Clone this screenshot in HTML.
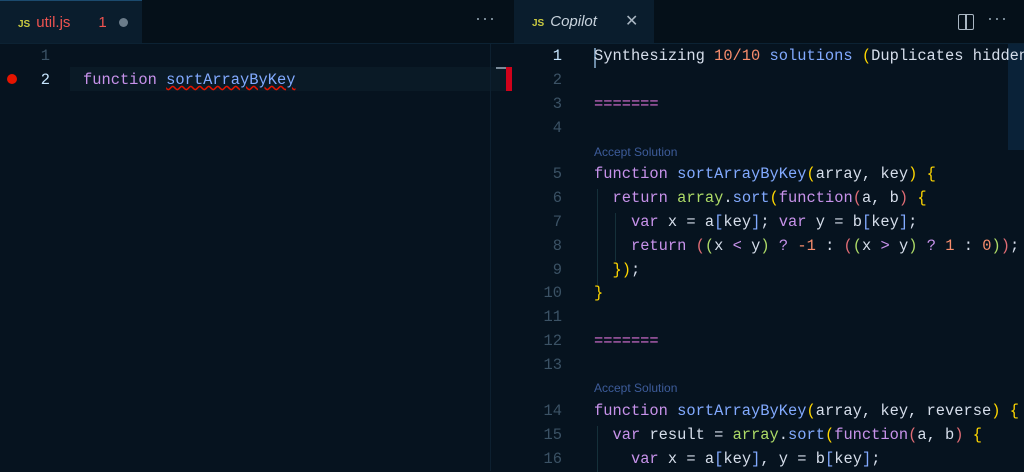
<!DOCTYPE html><html><head><style>
body{margin:0;width:1024px;height:471px;background:#06131f;overflow:hidden;font-family:"Liberation Mono",monospace;font-size:15.4px;color:#d6deeb;position:relative}
.tabbar{position:absolute;top:0;height:43px;background:#051019;border-bottom:1px solid #0c2233}
.tab{position:absolute;top:0;height:43px;background:#0a1d2d;font-family:"Liberation Sans",sans-serif;font-size:15px;line-height:43px}
.js{color:#cbcb41;font-weight:bold;font-size:10px;margin-right:6px}
.ln{position:absolute;text-align:right;color:#3b5265;width:30px}
.code{position:absolute;white-space:pre}
.f{color:#c792ea}.n{color:#82aaff}.g{color:#addb67}.o{color:#f78c6c}.y{color:#ffd700}.p{color:#da70d6}.pk{color:#e06c75}
.acc{position:absolute;font-family:"Liberation Sans",sans-serif;font-size:12px;color:#3d5c9a}
.dots{position:absolute;top:8px;color:#8899a6;font-family:'Liberation Sans';font-size:18px;letter-spacing:1px}
#w{position:absolute;left:0;top:1px;width:1024px;height:471px}
</style></head><body>
<div class="tabbar" style="left:0;width:512px"></div>
<div class="tabbar" style="left:512px;width:512px"></div>
<div class="tab" style="left:0;width:142px;padding-left:18px;box-sizing:border-box;border-top:1px solid #1b4a6e"><span class="js">JS</span><span style="color:#ef5350">util.js</span><span style="color:#ef5350;margin-left:28px">1</span><span style="display:inline-block;width:9px;height:9px;border-radius:50%;background:#6b7c8a;margin-left:12px"></span></div>
<div class="dots" style="left:475px">···</div>
<div class="tab" style="left:514px;width:140px;padding-left:18px;box-sizing:border-box"><span class="js">JS</span><i style="color:#c8d3dd">Copilot</i><span style="color:#a9b6c2;margin-left:28px;font-size:16px">✕</span></div>
<div style="position:absolute;left:958px;top:14px;width:14px;height:14px;border:1.5px solid #a9b6c2;border-radius:2px"><div style="position:absolute;left:6px;top:0;width:1.5px;height:14px;background:#a9b6c2"></div></div>
<div class="dots" style="left:987px">···</div>
<div id="w">
<div style="position:absolute;left:70px;top:66px;width:442px;height:24px;background:#0a1a26"></div>
<div style="position:absolute;left:490px;top:43px;width:1px;height:427px;background:#0d2030"></div>
<div style="position:absolute;left:496px;top:66px;width:16px;height:2px;background:#7a8a99"></div>
<div style="position:absolute;left:506px;top:66px;width:6px;height:24px;background:#d0021b"></div>
<div style="position:absolute;left:7px;top:73px;width:10px;height:10px;border-radius:50%;background:#e51400"></div>
<div class="ln" style="left:20px;top:46px">1</div>
<div class="ln" style="left:20px;top:70px;color:#c5e4fd">2</div>
<div class="code" style="left:83px;top:70px"><span class="f">function</span> <span class="n" style="text-decoration:underline wavy #e51400">sortArrayByKey</span></div>
<div style="position:absolute;left:1008px;top:43px;width:16px;height:106px;background:#0a2238"></div>
<div style="position:absolute;left:594px;top:47px;width:1.5px;height:20px;background:#6b8aa6"></div>
<div class="ln" style="left:532px;top:46px;color:#c5e4fd">1</div>
<div class="code" style="left:594px;top:46px">Synthesizing <span class="o">10/10</span> <span class="n">solutions</span> <span class="y">(</span>Duplicates hidden</div>
<div class="ln" style="left:532px;top:70px">2</div>
<div class="ln" style="left:532px;top:94px">3</div>
<div class="code p" style="left:594px;top:94px">=======</div>
<div class="ln" style="left:532px;top:118px">4</div>
<div class="acc" style="left:594px;top:144px">Accept Solution</div>
<div class="ln" style="left:532px;top:164px">5</div>
<div class="code" style="left:594px;top:164px"><span class="f">function</span> <span class="n">sortArrayByKey</span><span class="y">(</span>array, key<span class="y">)</span> <span class="y">{</span></div>
<div class="ln" style="left:532px;top:188px">6</div>
<div class="code" style="left:594px;top:188px">  <span class="f">return</span> <span class="g">array</span>.<span class="n">sort</span><span class="y">(</span><span class="f">function</span><span class="pk">(</span>a, b<span class="pk">)</span> <span class="y">{</span></div>
<div class="ln" style="left:532px;top:212px">7</div>
<div class="code" style="left:594px;top:212px">    <span class="f">var</span> x = a<span class="n">[</span>key<span class="n">]</span>; <span class="f">var</span> y = b<span class="n">[</span>key<span class="n">]</span>;</div>
<div class="ln" style="left:532px;top:236px">8</div>
<div class="code" style="left:594px;top:236px">    <span class="f">return</span> <span class="pk">(</span><span class="g">(</span>x <span class="f">&lt;</span> y<span class="g">)</span> <span class="f">?</span> <span class="o">-1</span> : <span class="pk">(</span><span class="g">(</span>x <span class="f">&gt;</span> y<span class="g">)</span> <span class="f">?</span> <span class="o">1</span> : <span class="o">0</span><span class="g">)</span><span class="pk">)</span>;</div>
<div class="ln" style="left:532px;top:260px">9</div>
<div class="code" style="left:594px;top:260px">  <span class="y">})</span>;</div>
<div class="ln" style="left:532px;top:283px">10</div>
<div class="code y" style="left:594px;top:283px">}</div>
<div class="ln" style="left:532px;top:307px">11</div>
<div class="ln" style="left:532px;top:331px">12</div>
<div class="code p" style="left:594px;top:331px">=======</div>
<div class="ln" style="left:532px;top:355px">13</div>
<div class="acc" style="left:594px;top:380px">Accept Solution</div>
<div class="ln" style="left:532px;top:401px">14</div>
<div class="code" style="left:594px;top:401px"><span class="f">function</span> <span class="n">sortArrayByKey</span><span class="y">(</span>array, key, reverse<span class="y">)</span> <span class="y">{</span></div>
<div class="ln" style="left:532px;top:425px">15</div>
<div class="code" style="left:594px;top:425px">  <span class="f">var</span> result = <span class="g">array</span>.<span class="n">sort</span><span class="y">(</span><span class="f">function</span><span class="pk">(</span>a, b<span class="pk">)</span> <span class="y">{</span></div>
<div class="ln" style="left:532px;top:449px">16</div>
<div class="code" style="left:594px;top:449px">    <span class="f">var</span> x = a<span class="n">[</span>key<span class="n">]</span>, y = b<span class="n">[</span>key<span class="n">]</span>;</div>
<div style="position:absolute;left:597px;top:188px;width:1px;height:96px;background:#15303a"></div>
<div style="position:absolute;left:615px;top:212px;width:1px;height:48px;background:#15303a"></div>
<div style="position:absolute;left:597px;top:425px;width:1px;height:46px;background:#15303a"></div>
</div>
</body></html>
